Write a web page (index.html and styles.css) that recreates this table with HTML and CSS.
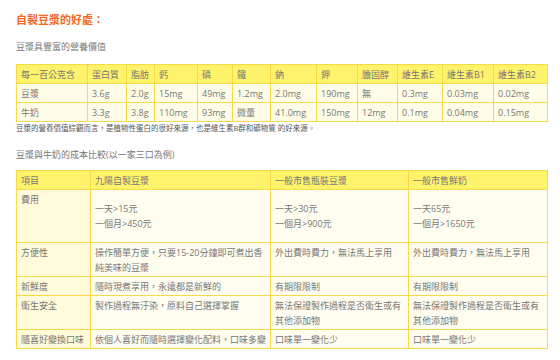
FILE: index.html
```html
<!DOCTYPE html>
<html lang="zh-Hant">
<head>
<meta charset="utf-8">
<title>自製豆漿的好處</title>
<link rel="stylesheet" href="styles.css">
</head>
<body>
<div class="page">
  <h1 class="title">自製豆漿的好處：</h1>
  <p class="sub">豆漿具豐富的營養價值</p>
  <table class="nutri">
    <colgroup>
      <col style="width:71px"><col style="width:39px"><col style="width:28px"><col style="width:43px"><col style="width:35px"><col style="width:38px"><col style="width:46px"><col style="width:41px"><col style="width:40px"><col style="width:45px"><col style="width:51px"><col style="width:54px">
    </colgroup>
    <tr class="head">
      <td>每一百公克含</td><td>蛋白質</td><td>脂肪</td><td>鈣</td><td>磷</td><td>鐵</td><td>鈉</td><td>鉀</td><td>膽固醇</td><td>維生素E</td><td>維生素B1</td><td>維生素B2</td>
    </tr>
    <tr>
      <td>豆漿</td><td>3.6g</td><td>2.0g</td><td>15mg</td><td>49mg</td><td>1.2mg</td><td>2.0mg</td><td>190mg</td><td>無</td><td>0.3mg</td><td>0.03mg</td><td>0.02mg</td>
    </tr>
    <tr>
      <td>牛奶</td><td>3.3g</td><td>3.8g</td><td>110mg</td><td>93mg</td><td>微量</td><td>41.0mg</td><td>150mg</td><td>12mg</td><td>0.1mg</td><td>0.04mg</td><td>0.15mg</td>
    </tr>
  </table>
  <p class="note">豆漿的營養價值綜觀而言，是植物性蛋白的很好來源，也是維生素B群和礦物質 的好來源。</p>
  <p class="sub sec">豆漿與牛奶的成本比較(以一家三口為例)</p>
  <table class="cost">
    <colgroup>
      <col style="width:74px"><col style="width:180px"><col style="width:138px"><col style="width:139px">
    </colgroup>
    <tr class="head">
      <td>項目</td><td>九陽自製豆漿</td><td>一般市售瓶裝豆漿</td><td>一般市售鮮奶</td>
    </tr>
    <tr>
      <td class="key">費用</td>
      <td><p class="gap">一天&gt;15元<br>一個月&gt;450元</p></td>
      <td><p class="gap">一天&gt;30元<br>一個月&gt;900元</p></td>
      <td><p class="gap">一天65元<br>一個月&gt;1650元</p></td>
    </tr>
    <tr>
      <td class="key">方便性</td>
      <td>操作簡單方便，只要15-20分鐘即可煮出香純美味的豆漿</td>
      <td>外出費時費力，無法馬上享用</td>
      <td>外出費時費力，無法馬上享用</td>
    </tr>
    <tr>
      <td class="key">新鮮度</td>
      <td>隨時現煮享用，永遠都是新鮮的</td>
      <td>有期限限制</td>
      <td>有期限限制</td>
    </tr>
    <tr>
      <td class="key">衛生安全</td>
      <td>製作過程無汙染，原料自己選擇掌握</td>
      <td>無法保證製作過程是否衛生或有其他添加物</td>
      <td>無法保證製作過程是否衛生或有其他添加物</td>
    </tr>
    <tr>
      <td class="key">隨喜好變換口味</td>
      <td>依個人喜好而隨時選擇變化配料，口味多變</td>
      <td>口味單一變化少</td>
      <td>口味單一變化少</td>
    </tr>
  </table>
</div>
</body>
</html>
```

FILE: styles.css
```css
html, body {
  margin: 0;
  padding: 0;
  background: #ffffff;
}

body {
  font-family: "Open Sans", "Noto Sans CJK TC", sans-serif;
  color: #777777;
  font-size: 9px;
}

.page {
  padding: 12px 13px 0 16px;
}

.title {
  margin: 0;
  font-size: 11px;
  line-height: 16px;
  font-weight: bold;
  color: #f4681f;
}

.sub {
  margin: 12px 0 0;
  font-size: 9px;
  line-height: 14px;
  color: #777777;
}

.sec {
  margin-top: 14px;
}

.note {
  margin: 0;
  font-size: 7.5px;
  line-height: 12px;
  color: #555555;
}

table {
  border-collapse: collapse;
  table-layout: fixed;
  width: 531px;
  background: #fffdf0;
}

td {
  border: 1px solid #f6da48;
  vertical-align: top;
  text-align: left;
  padding: 2px 4px 1px;
  line-height: 15px;
  font-size: 9px;
  color: #777777;
  overflow: hidden;
  white-space: normal;
}

.nutri {
  margin-top: 10px;
  background: #fffde8;
}

.nutri td {
  padding: 2px 3px 1px 4px;
  white-space: nowrap;
  font-size: 9px;
}

.head td {
  background: #fff36b;
}

.cost {
  margin-top: 8px;
}

.cost .key {
  background: #fffad9;
}

.gap {
  margin: 9px 0 10px;
}
```
